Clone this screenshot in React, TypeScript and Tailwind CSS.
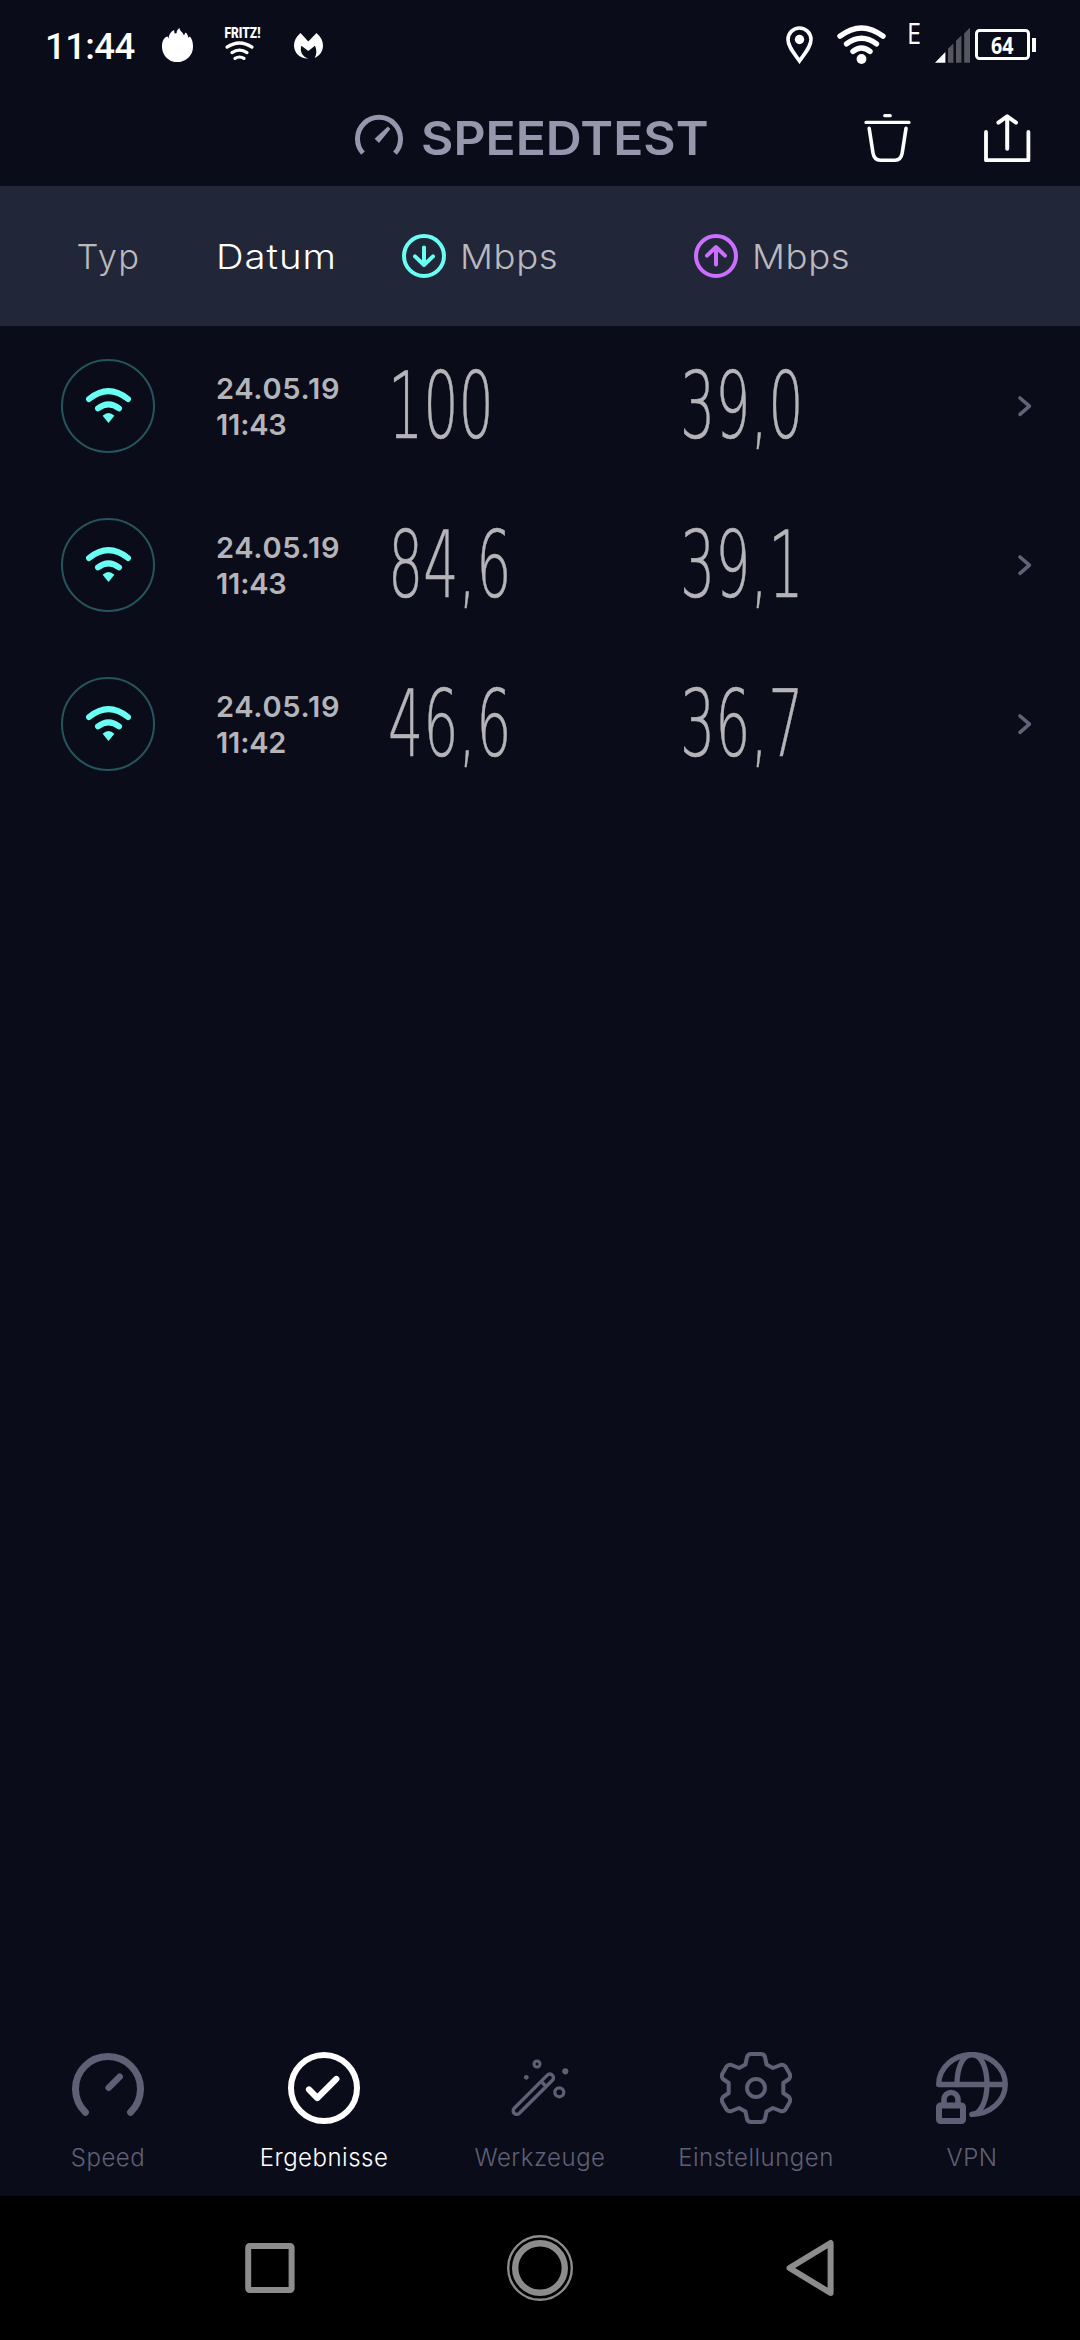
import type { ReactNode } from 'react';

interface Result {
  id: number;
  date: string;
  time: string;
  download: string;
  upload: string;
}

interface Tab {
  label: string;
  icon: ReactNode;
  active?: boolean;
}

const results: Result[] = [
  { id: 1, date: '24.05.19', time: '11:43', download: '100', upload: '39,0' },
  { id: 2, date: '24.05.19', time: '11:43', download: '84,6', upload: '39,1' },
  { id: 3, date: '24.05.19', time: '11:42', download: '46,6', upload: '36,7' },
];

const tabs: Tab[] = [
  {
    label: 'Speed',
    icon: (
      <>
        <path d="M13.4 60.3A32.5 32.5 0 1 1 58.6 60.3" strokeWidth="7" />
        <path d="M36.7 35.7L47.7 24.7" strokeWidth="6.5" />
      </>
    ),
  },
  {
    label: 'Ergebnisse',
    active: true,
    icon: (
      <>
        <circle cx="36" cy="36" r="33" strokeWidth="6" />
        <path d="M21 37.5L29.3 46L48.3 27" strokeWidth="6.2" />
      </>
    ),
  },
  {
    label: 'Werkzeuge',
    icon: (
      <>
        <g transform="translate(29.3 42.2) rotate(-45)" strokeWidth="3.4">
          <rect x="-27" y="-3.6" width="54" height="7.2" rx="3.6" />
          <path d="M14.5 -3V3" />
        </g>
        <circle cx="33" cy="12" r="3" strokeWidth="3" />
        <circle cx="55.3" cy="40.3" r="4.5" strokeWidth="3.2" />
        <circle cx="61.3" cy="19.3" r="3.1" fill="currentColor" stroke="none" />
        <circle cx="22.3" cy="25.3" r="2.4" fill="currentColor" stroke="none" />
      </>
    ),
  },
  {
    label: 'Einstellungen',
    icon: (
      <>
        <path
          d="M31 2H41Q44 2 45 5L46.5 12.5L53 16L60.5 13Q63.5 12 65.5 14.5L69.5 21.5Q71 24.5 69 27L63.3 31V41L69 45Q71 47.5 69.5 50.5L65.5 57.5Q63.5 60 60.5 59L53 56L46.5 59.5L45 67Q44 70 41 70H31Q28 70 27 67L25.5 59.5L19 56L11.5 59Q8.5 60 6.5 57.5L2.5 50.5Q1 47.5 3 45L8.7 41V31L3 27Q1 24.5 2.5 21.5L6.5 14.5Q8.5 12 11.5 13L19 16L25.5 12.5L27 5Q28 2 31 2Z"
          strokeWidth="4"
        />
        <circle cx="36" cy="36" r="9" strokeWidth="4" />
      </>
    ),
  },
  {
    label: 'VPN',
    icon: (
      <>
        <path d="M36 62.3A33.3 30 0 0 0 69.3 32.5A33.3 30 0 0 0 2.7 32.5H69.3" strokeWidth="5.3" />
        <path d="M21 32.5C21 15 27 2.7 36 2.7S51 15 51 32.5C51 48 45 62 36 62.3" strokeWidth="5.3" />
        <rect x="3" y="53.5" width="24" height="15.5" rx="1.5" strokeWidth="6" />
        <path d="M8 52V47.5A7 7 0 0 1 22 47.5V52" strokeWidth="5.5" />
      </>
    ),
  },
];

function StatusBar() {
  return (
    <div className="flex h-[90px] items-start text-white">
      <span className="ml-[45px] mt-[24px] w-[117px] font-['Roboto',sans-serif] text-[36.5px] font-medium leading-[45px] tracking-[-0.6px]">
        11:44
      </span>
      <svg className="mt-[28px]" width="31" height="34" viewBox="0 0 31 34" fill="currentColor">
        <path d="M0 19C0 14 1 11 4 9L5.6 8.6L6.6 10.5C6.6 7 8.6 3.6 12 2L12.6 5.4L14.6 5.2C14.6 3 15.6 1 17.5 0C17.8 3.4 21 4 22 7.6L23.4 4.6C25.8 5.8 25.8 8 26.4 9.8L28 8.6C30.2 11.6 31 14.6 31 18.5A15.5 15.5 0 0 1 0 19Z" />
      </svg>
      <svg className="ml-[21px] mt-[13px]" width="58" height="50" viewBox="-10 -12 58 50" fill="none" stroke="currentColor" strokeWidth="3.2" strokeLinecap="round">
        <text x="0.5" y="12.5" textLength="36" lengthAdjust="spacingAndGlyphs" fill="currentColor" stroke="none" className="font-['Roboto',sans-serif] text-[14px] font-black">
          FRITZ!
        </text>
        <path d="M3 22.2Q15.5 13.8 28 22.2M8 27.6Q15.5 22.6 23 27.6M11 33.4Q15.5 30.6 20 33.4" />
      </svg>
      <svg className="ml-[22px] mt-[33px]" width="29" height="26" viewBox="0 0 29 26" fill="currentColor">
        <path d="M6.5 0L14.3 8.6L22.5 0C27 4 29 8 29 12.5C29 18 26 22.6 20.6 25C22.8 21.6 23 17 21 12.8L14.3 18L7.4 12.8C5.4 18.4 8.6 24 14.4 25.6C6 26 0 20 0 12.6C0 8 2 4 6.5 0Z" />
      </svg>

      <svg className="ml-auto mt-[26px]" width="27" height="38" viewBox="0 0 27 38" fill="none" stroke="currentColor" strokeWidth="3.6">
        <path d="M13.5 35C8 27 2 20.5 2 13.5A11.5 11.5 0 0 1 25 13.5C25 20.5 19 27 13.5 35Z" />
        <circle cx="13.5" cy="13.5" r="4.7" fill="currentColor" stroke="none" />
      </svg>
      <svg className="ml-[24px] mt-[25px]" width="49" height="39" viewBox="0 0 49 39" fill="none" stroke="currentColor" strokeWidth="5.4" strokeLinecap="round">
        <path d="M3 11.2Q24.5 -5.4 46 11.2M9.5 18.8Q24.5 7.6 39.5 18.8M16 26.4Q24.5 19.6 33 26.4" />
        <circle cx="24.5" cy="34" r="4.9" fill="currentColor" stroke="none" />
      </svg>
      <svg className="ml-[20px] mt-[10px]" width="16" height="46" viewBox="-2 -12 16 46" fill="currentColor">
        <text x="-1" y="22" textLength="14" lengthAdjust="spacingAndGlyphs" className="font-['Open_Sans',sans-serif] text-[29px] font-medium">
          E
        </text>
      </svg>
      <svg className="ml-[13px] mt-[28px]" width="35" height="35" viewBox="0 0 35 35" fill="#55565f">
        <path d="M0 34.8L10.4 24V34.8Z" fill="#fff" />
        <path d="M13 20.8L18.4 15.4V34.8H13ZM21 12.8L26.4 7.4V34.8H21ZM29.2 5.4L35 -0.4V34.8H29.2Z" />
      </svg>
      <svg className="mr-[43px] ml-[5px] mt-[29px]" width="62" height="32" viewBox="0 0 62 32" fill="none" stroke="currentColor" strokeWidth="3">
        <rect x="1.5" y="1.5" width="52" height="28" rx="3" />
        <rect x="57" y="9" width="4" height="14" fill="currentColor" stroke="none" />
        <text x="16" y="24.8" textLength="22.5" lengthAdjust="spacingAndGlyphs" fill="currentColor" stroke="none" className="font-['Open_Sans',sans-serif] text-[24px] font-bold">
          64
        </text>
      </svg>
    </div>
  );
}

function Header() {
  return (
    <header className="flex h-24 items-center">
      <svg className="ml-[355px]" width="48" height="48" viewBox="0 0 48 48" fill="none">
        <path d="M8 39.2A21.5 21.5 0 1 1 40 39.2" stroke="#9697ad" strokeWidth="5" />
        <path d="M19.6 24.7L24 28.9L35.4 15L32.9 12.5Z" fill="#9697ad" />
      </svg>
      <h1 className="ml-[18px] w-[443px] text-[47px] font-[560] leading-[60px] text-[#9697ad]">
        <span className="inline-block origin-left scale-x-[1.06]">SPEEDTEST</span>
      </h1>
      <svg width="47" height="48" viewBox="0 0 47 48" fill="none" stroke="#fff" strokeWidth="3.6" strokeLinecap="round" strokeLinejoin="round">
        <path d="M2 8.4H45M20.8 1.7H26.2" strokeWidth="3.3" />
        <path d="M5.2 14.4L9 39Q10.2 46.2 16.4 46.2H31Q37 46.2 38.2 39L42 14.4" />
      </svg>
      <svg className="ml-[73px]" width="47" height="48" viewBox="0 0 47 48" fill="none" stroke="#fff" strokeWidth="4" strokeLinecap="round" strokeLinejoin="round">
        <path d="M2 18V46.2H44.4V18" strokeWidth="3.8" />
        <path d="M23.2 34.8V2.4M14.4 8.7L23.2 2.4L32 8.7" />
      </svg>
    </header>
  );
}

function SpeedColumnTitle({ direction }: { direction: 'down' | 'up' }) {
  const down = direction === 'down';
  return (
    <div className="flex items-center gap-[14px] pl-3">
      <svg
        className={down ? 'text-[#6afff3]' : 'text-[#cc6eff]'}
        width="44"
        height="44"
        viewBox="0 0 44 44"
        fill="none"
        stroke="currentColor"
        strokeWidth="4"
        strokeLinecap="round"
        strokeLinejoin="round"
      >
        <circle cx="22" cy="22" r="20" />
        <path d={down ? 'M22 13.4V30.6M13 22.4L22 31L31 22.4' : 'M22 30.6V13.4M13 21.6L22 13L31 21.6'} />
      </svg>
      <span className="inline-block origin-left scale-x-[1.06] pt-[2px] tracking-[0.6px]">Mbps</span>
    </div>
  );
}

function TableHead() {
  return (
    <div className="grid h-[140px] grid-cols-[216px_174px_292px_292px_1fr] items-center bg-[#222639] text-[34.5px] font-[360] text-[#b9b9be]">
      <span className="pl-px pt-[2px] text-center tracking-[1.4px]">Typ</span>
      <span className="origin-left scale-x-[1.11] pt-[2px] tracking-[0.9px] text-white">Datum</span>
      <SpeedColumnTitle direction="down" />
      <SpeedColumnTitle direction="up" />
    </div>
  );
}

function Speed({ value }: { value: string }) {
  return (
    <span className="-ml-[2px] inline-block origin-left whitespace-nowrap scale-x-[0.6] font-['DejaVu_Sans',sans-serif] text-[92.5px] font-extralight leading-[110px] text-[#b5b5b9] [-webkit-text-stroke:0.6px_#b5b5b9]">
      {value}
    </span>
  );
}

function ResultRow({ result }: { result: Result }) {
  return (
    <li className="grid h-[159px] grid-cols-[216px_174px_292px_292px_1fr] items-center">
      <div className="mx-auto flex size-[94px] items-center justify-center rounded-full border-2 border-[#25555b]">
        <svg width="45" height="35" viewBox="0 0 45 35" fill="none" stroke="#6afff3" strokeWidth="6" strokeLinecap="round">
          <path d="M3 11Q22.5 -4.8 42 11M12 20.4Q22.5 12.4 33 20.4" />
          <path d="M16.6 27.8Q22.5 22.4 28.4 27.8L22.5 35Z" fill="#6afff3" stroke="none" />
        </svg>
      </div>
      <div className="pt-[2px] text-[29px] font-semibold leading-9 tracking-[0.7px] text-[#b5b5b9]">
        <div>{result.date}</div>
        <div className="tracking-[-0.2px]">{result.time}</div>
      </div>
      <Speed value={result.download} />
      <Speed value={result.upload} />
      <svg className="ml-[43px]" width="16" height="22" viewBox="0 0 16 22" fill="none" stroke="#626378" strokeWidth="3.6" strokeLinecap="round" strokeLinejoin="round">
        <path d="M3 3L12.4 11.2L3 19.4" />
      </svg>
    </li>
  );
}

function TabBar() {
  return (
    <nav className="grid grid-cols-5 pb-[22px]">
      {tabs.map(tab => (
        <div key={tab.label} className={`flex flex-col items-center gap-[18px] ${tab.active ? 'text-white' : 'text-[#5f6075]'}`}>
          <svg width="72" height="72" viewBox="0 0 72 72" fill="none" stroke="currentColor" strokeLinecap="round" strokeLinejoin="round">
            {tab.icon}
          </svg>
          <span className="text-2xl font-[360] tracking-[0.5px]">{tab.label}</span>
        </div>
      ))}
    </nav>
  );
}

function SystemNav() {
  return (
    <div className="flex h-36 items-center bg-black text-[#8c8c8c]">
      <svg className="ml-[245px]" width="50" height="50" viewBox="0 0 50 50" fill="none" stroke="currentColor" strokeWidth="6">
        <rect x="3.2" y="3" width="43.4" height="44" rx="1.5" />
      </svg>
      <svg className="ml-[212px]" width="66" height="66" viewBox="0 0 66 66" fill="none" stroke="currentColor">
        <circle cx="33" cy="33" r="31.8" strokeWidth="2.4" />
        <circle cx="33" cy="33" r="24.8" strokeWidth="6.4" />
      </svg>
      <svg className="ml-[212px]" width="50" height="58" viewBox="0 0 50 58" fill="none" stroke="currentColor" strokeWidth="6" strokeLinejoin="round">
        <path d="M4.5 29L45.6 4V54Z" />
      </svg>
    </div>
  );
}

export default function App() {
  return (
    <div className="flex h-[2340px] w-[1080px] flex-col overflow-hidden bg-[#0a0c1a] font-['Inter',sans-serif]">
      <StatusBar />
      <Header />
      <TableHead />
      <ul className="flex-1">
        {results.map(result => (
          <ResultRow key={result.id} result={result} />
        ))}
      </ul>
      <TabBar />
      <SystemNav />
    </div>
  );
}
